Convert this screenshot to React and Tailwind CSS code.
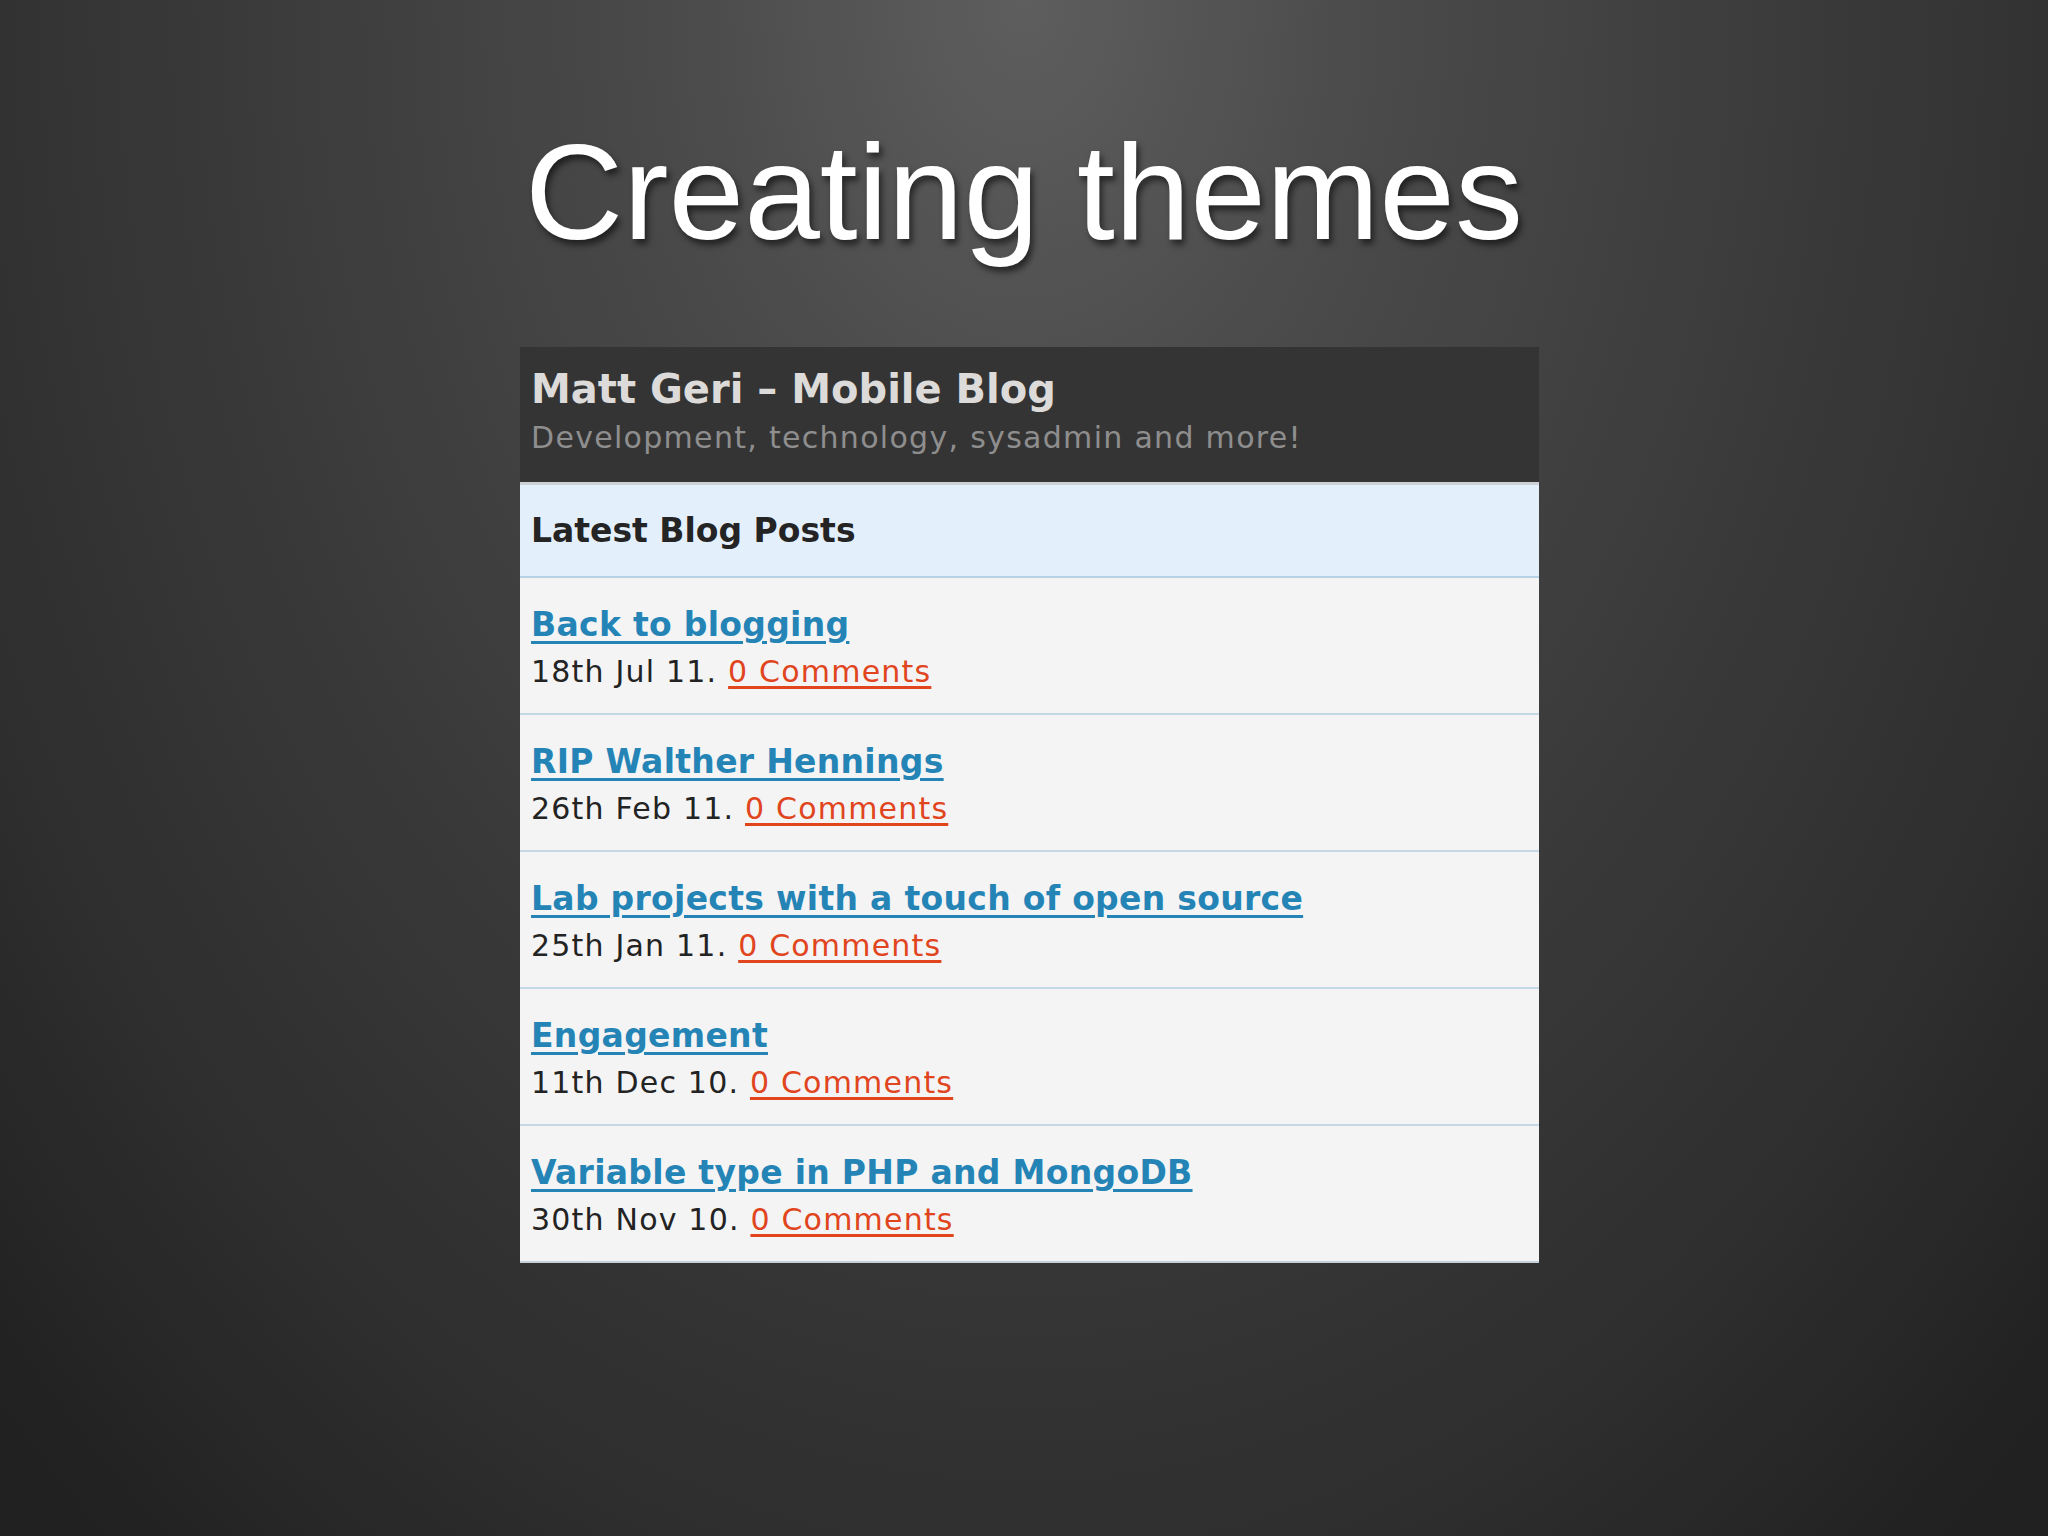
import React from "react";

const posts = [
  { title: "Back to blogging", date: "18th Jul 11." },
  { title: "RIP Walther Hennings", date: "26th Feb 11." },
  { title: "Lab projects with a touch of open source", date: "25th Jan 11." },
  { title: "Engagement", date: "11th Dec 10." },
  { title: "Variable type in PHP and MongoDB", date: "30th Nov 10." },
];

export default function App() {
  return (
    <div className="w-full h-[1536px] overflow-hidden bg-[#2c2c2c] bg-[radial-gradient(ellipse_70%_130%_at_50%_0%,#5e5e5e_0%,#4a4a4a_25%,#3a3a3a_55%,#2e2e2e_80%,#212121_100%)] pt-[124px]">
      <h1 className="text-center text-white text-[136px] leading-none font-normal font-['Liberation_Sans',Arial,sans-serif] [text-shadow:3px_5px_6px_rgba(0,0,0,0.55)]">
        Creating themes
      </h1>
      <div className="ml-[520px] mt-[87px] w-[1019px] font-['DejaVu_Sans',Verdana,sans-serif]">
        <div className="bg-[#353434] pt-[18px] pl-[11px] h-[138px] border-b-[3px] border-[#cdd1d4]">
          <div className="text-[40px] leading-[48px] font-bold text-[#dcdbd9]">
            Matt Geri – Mobile Blog
          </div>
          <div className="mt-[7px] text-[30px] leading-[36px] tracking-[1.3px] text-[#8e8e8e]">
            Development, technology, sysadmin and more!
          </div>
        </div>
        <div className="bg-[#e3effb] h-[93px] pl-[11px] flex items-center border-b-2 border-[#b7d2e4]">
          <div className="text-[33px] leading-[40px] font-bold text-[#242424]">
            Latest Blog Posts
          </div>
        </div>
        {posts.map((p, i) => (
          <div
            key={i}
            className={
              "bg-[#f4f4f5] h-[137px] pt-[27px] pl-[11px] border-b-2 " +
              (i === posts.length - 1 ? "border-[#c5d0d9]" : "border-[#c3d7e5]")
            }
          >
            <div className="text-[33px] leading-[40px] font-bold tracking-[0.3px]">
              <a className="text-[#2584b6] underline decoration-[3px] underline-offset-[5px] cursor-pointer">
                {p.title}
              </a>
            </div>
            <div className="mt-[9px] text-[30px] leading-[36px] tracking-[1.2px] text-[#232323]">
              {p.date}{" "}
              <a className="text-[#e0451d] underline decoration-[3px] underline-offset-[4px] cursor-pointer">
                0 Comments
              </a>
            </div>
          </div>
        ))}
      </div>
    </div>
  );
}
